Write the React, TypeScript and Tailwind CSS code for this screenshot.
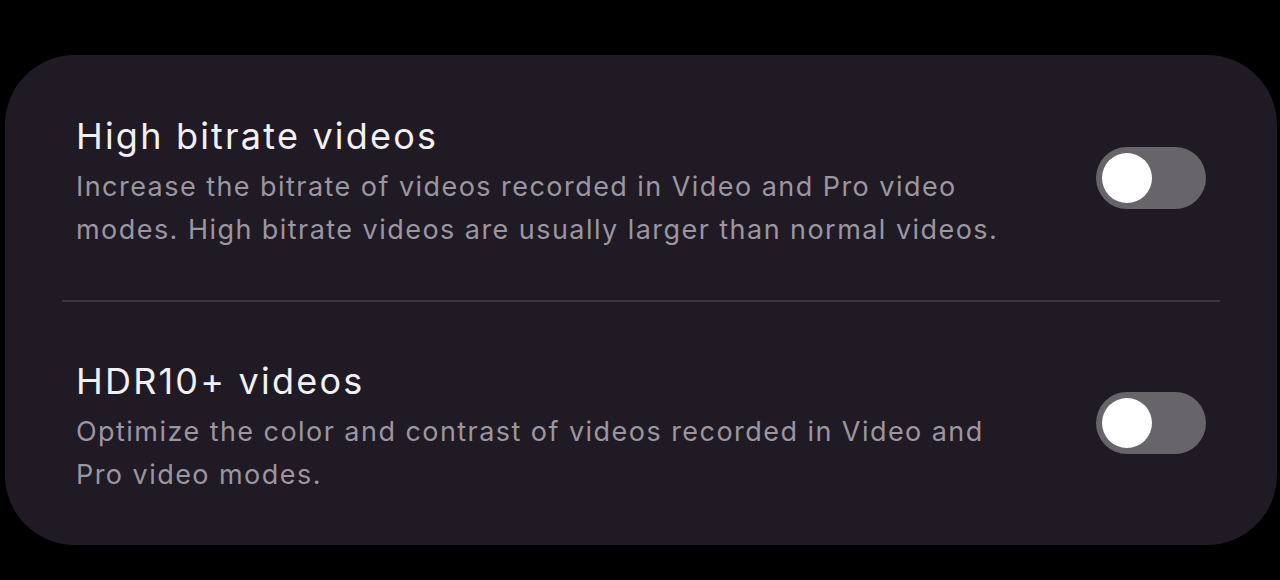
import { useState } from 'react';

type Setting = {
  id: string;
  title: string;
  lines: string[];
};

const settings: Setting[] = [
  {
    id: 'bitrate',
    title: 'High bitrate videos',
    lines: [
      'Increase the bitrate of videos recorded in Video and Pro video',
      'modes. High bitrate videos are usually larger than normal videos.',
    ],
  },
  {
    id: 'hdr',
    title: 'HDR10+ videos',
    lines: ['Optimize the color and contrast of videos recorded in Video and', 'Pro video modes.'],
  },
];

function Toggle({ on, onChange }: { on: boolean; onChange: () => void }) {
  return (
    <button
      onClick={onChange}
      className={`mb-[10px] w-[110px] h-[62px] rounded-full flex items-center px-[6px] shrink-0 ${
        on ? 'bg-[#3e91ff] justify-end' : 'bg-[#67646a] justify-start'
      }`}
    >
      <span className="block w-[50px] h-[50px] rounded-full bg-white" />
    </button>
  );
}

export default function App() {
  const [state, setState] = useState<Record<string, boolean>>({ bitrate: false, hdr: false });

  return (
    <div className="w-[1280px] h-[580px] bg-black pt-[55px] pl-[5px] pr-[3px] font-['Inter',sans-serif]">
      <div className="h-[490px] rounded-[70px] bg-[#1f1a24] flex flex-col">
        {settings.map((s, i) => (
          <div key={s.id}>
            {i > 0 && <div className="mx-[57px] h-[2px] bg-[#3a3540]" />}
            <div
              className={`flex items-center justify-between pl-[71px] pr-[71px] ${
                i === 0 ? 'pt-[59px] pb-[49px]' : 'pt-[57px]'
              }`}
            >
              <div>
                <div className="text-[36px] leading-[44px] tracking-[2.2px] text-[#f2f0f3]">{s.title}</div>
                <div className="mt-[7px] text-[27px] leading-[43px] tracking-[1.45px] text-[#9b96a0]">
                  {s.lines.map(l => (
                    <div key={l} className="whitespace-nowrap">{l}</div>
                  ))}
                </div>
              </div>
              <Toggle on={state[s.id]} onChange={() => setState(p => ({ ...p, [s.id]: !p[s.id] }))} />
            </div>
          </div>
        ))}
      </div>
    </div>
  );
}
